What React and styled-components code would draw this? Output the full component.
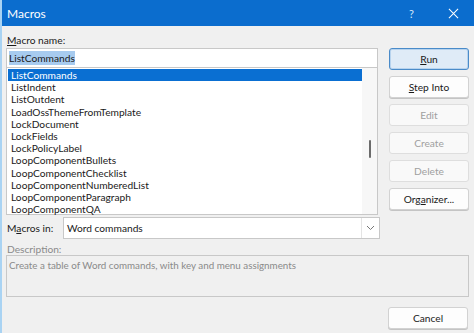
import React from 'react'
import styled, { createGlobalStyle } from 'styled-components'

const GlobalStyle = createGlobalStyle`
  html, body { margin: 0; padding: 0; background: #f0f0f0; }
  body { font-family: Lato, "Noto Sans", sans-serif; }
`

const macros = [
  'ListCommands',
  'ListIndent',
  'ListOutdent',
  'LoadOssThemeFromTemplate',
  'LockDocument',
  'LockFields',
  'LockPolicyLabel',
  'LoopComponentBullets',
  'LoopComponentChecklist',
  'LoopComponentNumberedList',
  'LoopComponentParagraph',
  'LoopComponentQA',
]

const App = () => {
  return (
    <>
      <GlobalStyle />
      <Dialog>
        <TitleBar>
          <Title>Macros</Title>
          <TitleButtons>
            <span>?</span>
            <CloseGlyph viewBox="0 0 12 12">
              <path d="M1 1 L11 11 M11 1 L1 11" stroke="#fff" strokeWidth="1.1" />
            </CloseGlyph>
          </TitleButtons>
        </TitleBar>

        <Body>
          <Top>
            <LeftCol>
              <Label><u>M</u>acro name:</Label>
              <NameInput>
                <Selected>ListCommands</Selected>
              </NameInput>
              <List>
                <Items>
                  {macros.map((m, i) => (
                    <Item key={m} $active={i === 0}>{m}</Item>
                  ))}
                </Items>
                <ScrollTrack>
                  <Thumb />
                </ScrollTrack>
              </List>
            </LeftCol>

            <ButtonCol>
              <Button $primary><u>R</u>un</Button>
              <Button><u>S</u>tep Into</Button>
              <Button disabled>Edit</Button>
              <Button disabled>Create</Button>
              <Button disabled>Delete</Button>
              <Button>Org<u>a</u>nizer...</Button>
            </ButtonCol>
          </Top>

          <MacrosInRow>
            <Label>M<u>a</u>cros in:</Label>
            <Select>
              <span>Word commands</span>
              <Chevron viewBox="0 0 17 20">
                <path d="M5 8 L8.5 11.5 L12 8" stroke="#777" strokeWidth="1" fill="none" />
              </Chevron>
            </Select>
          </MacrosInRow>

          <DescLabel>Description:</DescLabel>
          <Description>Create a table of Word commands, with key and menu assignments</Description>

          <Footer>
            <Button>Cancel</Button>
          </Footer>
        </Body>
      </Dialog>
    </>
  )
}

const Dialog = styled.div`
  width: 474px;
  height: 333px;
  background: #f0f0f0;
  border-left: 2px solid #a9d3f3;
  box-sizing: border-box;
  overflow: hidden;
`

const TitleBar = styled.div`
  height: 26px;
  background: #0b6dce;
  color: #fff;
  display: flex;
  align-items: center;
  justify-content: space-between;
  padding: 0 15px 0 5px;
`

const Title = styled.div`
  font-size: 12px;
`

const TitleButtons = styled.div`
  display: flex;
  align-items: center;
  gap: 34px;
  font-size: 11px;
  color: #d8e8f8;
`

const CloseGlyph = styled.svg`
  width: 11px;
  height: 11px;
`

const Body = styled.div`
  padding: 7px 4px 0 4px;
  font-size: 10px;
  color: #1a1a1a;
`

const Top = styled.div`
  display: flex;
  gap: 11px;
`

const LeftCol = styled.div`
  width: 372px;
  display: flex;
  flex-direction: column;
`

const Label = styled.div`
  font-size: 10.2px;
  line-height: 15px;
  height: 15px;
  white-space: nowrap;
  color: #1a1a1a;
  padding-left: 1px;
`

const NameInput = styled.div`
  height: 20px;
  border: 1px solid #c8c8c8;
  background: #fff;
  display: flex;
  align-items: center;
  padding-left: 2px;
  box-sizing: border-box;
  font-size: 10.2px;
`

const Selected = styled.span`
  background: #a7cbef;
  color: #1a1a1a;
  line-height: 14px;
`

const List = styled.div`
  height: 147px;
  border: 1px solid #c8c8c8;
  border-top: none;
  background: #fff;
  display: flex;
  box-sizing: border-box;
`

const Items = styled.div`
  flex: 1;
  padding: 1px 0 0 1px;
`

const Item = styled.div`
  height: 12.2px;
  line-height: 12.2px;
  font-size: 10.2px;
  padding-left: 3px;
  background: ${p => (p.$active ? '#0a6fd2' : 'transparent')};
  color: ${p => (p.$active ? '#fff' : '#1a1a1a')};
`

const ScrollTrack = styled.div`
  width: 15px;
  background: #f7f7f7;
  display: flex;
  justify-content: center;
  padding-top: 72px;
`

const Thumb = styled.div`
  width: 2px;
  height: 18px;
  background: #6b6b6b;
  border-radius: 1px;
`

const ButtonCol = styled.div`
  padding-top: 15px;
  display: flex;
  flex-direction: column;
  gap: 6px;
`

const Button = styled.button`
  width: 80px;
  height: 22px;
  font-family: inherit;
  font-size: 10.2px;
  border-radius: 3px;
  padding: 0;
  border: 1px solid ${p => (p.$primary ? '#4a8bc9' : '#d2d2d2')};
  background: ${p => (p.$primary ? '#dfebf7' : '#fdfdfd')};
  color: #1a1a1a;
  box-shadow: ${p => (p.$primary ? 'inset 0 0 0 1px #b7d3ee' : '0 1px 0 #c4c4c4')};
  &:disabled {
    color: #a0a0a0;
    background: #f9f9f9;
    box-shadow: none;
    border-color: #dedede;
  }
`

const MacrosInRow = styled.div`
  display: flex;
  align-items: center;
  gap: 4px;
  margin-top: 2px;
  width: 374px;
  & > ${Label} {
    width: 52px;
    flex-shrink: 0;
  }
`

const Select = styled.div`
  flex: 1;
  height: 22px;
  background: #fff;
  border: 1px solid #c8c8c8;
  box-sizing: border-box;
  display: flex;
  align-items: center;
  justify-content: space-between;
  padding-left: 3px;
  font-size: 10.2px;
  span { line-height: 20px; }
`

const Chevron = styled.svg`
  width: 17px;
  height: 20px;
  border-left: 1px solid #e4e4e4;
`

const DescLabel = styled(Label)`
  color: #8a8a8a;
  margin-top: 4px;
  line-height: 13px;
  height: 13px;
`

const Description = styled.div`
  margin-top: -1px;
  height: 42px;
  width: 463px;
  border: 1px solid #c8c8c8;
  box-sizing: border-box;
  padding: 3px 2px;
  color: #8a8a8a;
  font-size: 9.8px;
`

const Footer = styled.div`
  display: flex;
  justify-content: flex-end;
  padding: 10px 2px 0 0;
`

export default App
